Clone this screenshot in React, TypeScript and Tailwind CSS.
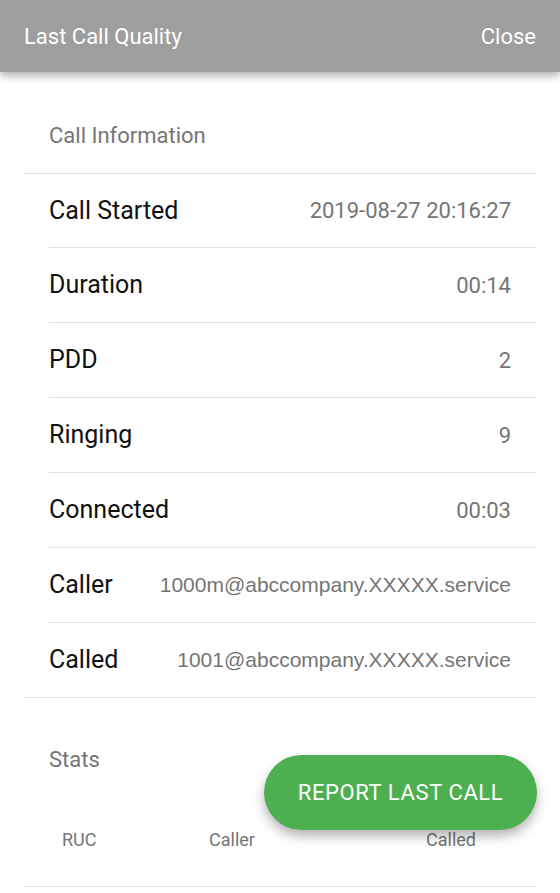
import React from "react";

const rows: { label: string; value: string; mono?: boolean }[] = [
  { label: "Call Started", value: "2019-08-27 20:16:27" },
  { label: "Duration", value: "00:14" },
  { label: "PDD", value: "2" },
  { label: "Ringing", value: "9" },
  { label: "Connected", value: "00:03" },
  { label: "Caller", value: "1000m@abccompany.XXXXX.service", mono: true },
  { label: "Called", value: "1001@abccompany.XXXXX.service", mono: true },
];

export default function App() {
  return (
    <div
      className="relative w-[560px] h-[893px] overflow-hidden bg-white"
      style={{ fontFamily: "Roboto, 'Noto Sans', sans-serif" }}
    >
      <header className="relative z-10 flex h-[72px] items-center justify-between bg-[#9e9e9e] px-6 text-[22px] text-white shadow-[0_4px_8px_rgba(0,0,0,0.3)]">
        <span>Last Call Quality</span>
        <span>Close</span>
      </header>

      <div className="mx-6">
        <div className="flex h-[101px] items-center pl-[25px] pt-[26px] text-[22px] text-[#757575]">
          Call Information
        </div>
        <div className="border-t border-[#e0e0e0]">
          {rows.map((r, i) => (
            <div key={r.label}>
              <div
                className={
                  i === 0
                    ? "flex h-[73px] items-center justify-between pl-[25px] pr-[25px]"
                    : "flex h-[74px] items-center justify-between pl-[25px] pr-[25px]"
                }
              >
                <span className="text-[25px] text-[#111]">{r.label}</span>
                {r.mono ? (
                  <span
                    className="text-[21px] text-[#757575]"
                    style={{ fontFamily: "'Liberation Sans', Arial, sans-serif" }}
                  >
                    {r.value}
                  </span>
                ) : (
                  <span className="text-[22px] text-[#757575]">{r.value}</span>
                )}
              </div>
              {i < rows.length - 1 ? (
                <div className="ml-[25px] h-px bg-[#e0e0e0]" />
              ) : (
                <div className="h-px bg-[#e0e0e0]" />
              )}
            </div>
          ))}
        </div>

        <div className="flex h-[125px] items-center pl-[25px] pb-[2px] text-[22px] text-[#757575]">
          Stats
        </div>
        <div className="flex h-[64px] items-center pb-[30px] text-[18px] text-[#757575] border-b border-[#e0e0e0]">
          <span className="ml-[38px] w-[147px]">RUC</span>
          <span className="w-[217px]">Caller</span>
          <span>Called</span>
        </div>
      </div>

      <button className="absolute left-[264px] top-[755px] flex h-[75px] w-[273px] items-center justify-center rounded-full bg-[#4caf50] text-[22px] tracking-[0.6px] text-white shadow-[0_6px_12px_rgba(0,0,0,0.3)]">
        REPORT LAST CALL
      </button>
    </div>
  );
}
